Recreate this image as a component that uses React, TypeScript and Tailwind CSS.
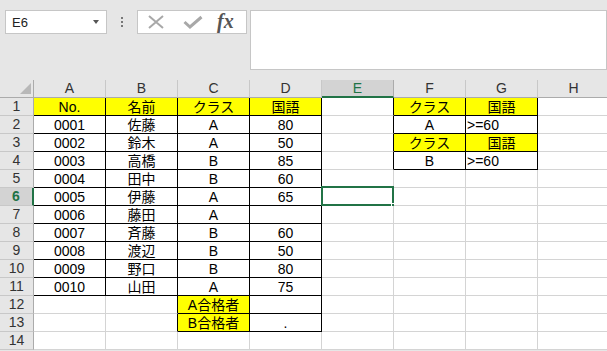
import React from "react";

const COLS = ["A", "B", "C", "D", "E", "F", "G", "H"];

const DATA: string[][] = [
  ["No.", "名前", "クラス", "国語", "", "クラス", "国語", ""],
  ["0001", "佐藤", "A", "80", "", "A", ">=60", ""],
  ["0002", "鈴木", "A", "50", "", "クラス", "国語", ""],
  ["0003", "高橋", "B", "85", "", "B", ">=60", ""],
  ["0004", "田中", "B", "60", "", "", "", ""],
  ["0005", "伊藤", "A", "65", "", "", "", ""],
  ["0006", "藤田", "A", "", "", "", "", ""],
  ["0007", "斉藤", "B", "60", "", "", "", ""],
  ["0008", "渡辺", "B", "50", "", "", "", ""],
  ["0009", "野口", "B", "80", "", "", "", ""],
  ["0010", "山田", "A", "75", "", "", "", ""],
  ["", "", "A合格者", "", "", "", "", ""],
  ["", "", "B合格者", ".", "", "", "", ""],
  ["", "", "", "", "", "", "", ""],
];

// r: 1-based row, c: 0-based column
function bordered(r: number, c: number) {
  if (r >= 1 && r <= 11 && c >= 0 && c <= 3) return true;
  if (r >= 12 && r <= 13 && c >= 2 && c <= 3) return true;
  if (r >= 1 && r <= 4 && c >= 5 && c <= 6) return true;
  return false;
}

function yellow(r: number, c: number) {
  if (r === 1 && c <= 3) return true;
  if ((r === 1 || r === 3) && (c === 5 || c === 6)) return true;
  if ((r === 12 || r === 13) && c === 2) return true;
  return false;
}

function leftAligned(r: number, c: number) {
  return c === 6 && (r === 2 || r === 4);
}

export default function App() {
  return (
    <div className="w-[607px] h-[351px] overflow-hidden bg-[#e6e6e6] font-['Liberation_Sans','Noto_Sans_CJK_JP',sans-serif] text-black">
      {/* formula bar area */}
      <div className="h-[80px] flex items-start pt-[10px]">
        <div className="ml-[5px] w-[102px] h-[24px] bg-white border border-[#c6c6c6] flex items-center justify-between pl-[6px] pr-[7px]">
          <span className="text-[13px] leading-none text-[#222]">E6</span>
          <span className="w-0 h-0 border-l-[3.5px] border-r-[3.5px] border-t-[4px] border-l-transparent border-r-transparent border-t-[#555]" />
        </div>
        <div className="ml-[14px] mt-[7px] flex flex-col gap-[2px]">
          <span className="w-[2px] h-[2px] bg-[#777]" />
          <span className="w-[2px] h-[2px] bg-[#777]" />
          <span className="w-[2px] h-[2px] bg-[#777]" />
        </div>
        <div className="ml-[14px] w-[110px] h-[24px] bg-white border border-[#c6c6c6] flex items-center">
          <svg className="ml-[9px]" width="18" height="14" viewBox="0 0 18 14">
            <path d="M2 1 L16 13 M16 1 L2 13" stroke="#a8a8a8" strokeWidth="2" fill="none" />
          </svg>
          <svg className="ml-[18px]" width="20" height="14" viewBox="0 0 20 14">
            <path d="M1.5 7 L7 12 L18.5 2" stroke="#a8a8a8" strokeWidth="3" fill="none" />
          </svg>
          <span className="ml-[14px] font-['Liberation_Serif',serif] italic font-bold text-[20px] leading-none text-[#555] -mt-[2px]">
            fx
          </span>
        </div>
        <div className="ml-[3px] flex-1 h-[60px] bg-white border border-[#c6c6c6]" />
      </div>

      {/* sheet grid */}
      <div className="grid grid-cols-[34px_repeat(8,72px)] grid-rows-[repeat(15,18px)]">
        {/* header row */}
        <div className="relative bg-[#e6e6e6] border-r border-b border-[#ababab]">
          <svg className="absolute right-[2px] bottom-[3px]" width="11" height="11" viewBox="0 0 11 11">
            <path d="M11 0 L11 11 L0 11 Z" fill="#b8b8b8" />
          </svg>
        </div>
        {COLS.map((c, i) => (
          <div
            key={c}
            className={
              i === 4
                ? "bg-[#d3d3d3] border-r border-r-[#ababab] border-b-2 border-b-[#217346] flex items-center justify-center text-[14px] text-[#217346]"
                : "bg-[#e6e6e6] border-r border-r-[#c8c8c8] border-b border-b-[#ababab] flex items-center justify-center text-[14px] text-[#333]"
            }
          >
            {c}
          </div>
        ))}

        {DATA.map((row, ri) => {
          const r = ri + 1;
          return (
            <React.Fragment key={r}>
              <div
                className={
                  r === 6
                    ? "bg-[#d3d3d3] border-b border-b-[#c8c8c8] border-r-2 border-r-[#217346] flex items-center justify-center text-[14px] font-bold text-[#217346]"
                    : "bg-[#e6e6e6] border-b border-b-[#c8c8c8] border-r border-r-[#ababab] flex items-center justify-center text-[14px] text-[#333]"
                }
              >
                {r}
              </div>
              {row.map((v, c) => {
                const rb = bordered(r, c) || bordered(r, c + 1);
                const bb = bordered(r, c) || bordered(r + 1, c);
                const bg = yellow(r, c) ? "bg-[#ffff00]" : "bg-white";
                const rbc = rb ? "border-r-black" : "border-r-[#d4d4d4]";
                const bbc = bb ? "border-b-black" : "border-b-[#d4d4d4]";
                const align = leftAligned(r, c) ? "justify-start pl-[1px]" : "justify-center";
                const sel = r === 6 && c === 4;
                return (
                  <div
                    key={c}
                    className={`relative border-r border-b ${rbc} ${bbc} ${bg} flex items-center ${align} text-[14px] leading-none whitespace-nowrap`}
                  >
                    {v}
                    {sel && (
                      <>
                        <div className="absolute -left-[1px] -top-[2px] -right-[1px] -bottom-[1px] border-2 border-[#217346]" />
                        <div className="absolute -right-[3px] -bottom-[3px] w-[5px] h-[5px] bg-[#217346] border border-white" />
                      </>
                    )}
                  </div>
                );
              })}
            </React.Fragment>
          );
        })}
      </div>
    </div>
  );
}
